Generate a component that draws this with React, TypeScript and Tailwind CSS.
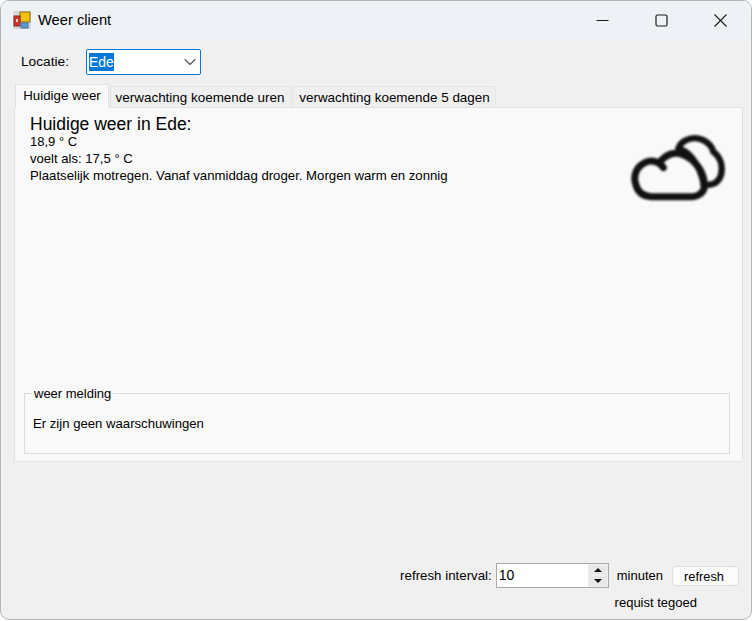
import { ChevronDown } from "lucide-react";

function AppIcon() {
  return (
    <svg width="18" height="18" viewBox="0 0 18 18" className="shrink-0">
      <rect x="0" y="0" width="18" height="18" fill="#d8d8d8" />
      <rect x="7" y="1" width="10" height="10" fill="#f4c20d" stroke="#8a6d1a" strokeWidth="1" />
      <rect x="1" y="5" width="6" height="10" fill="#d9342b" stroke="#7c2a26" strokeWidth="1" />
      <rect x="3" y="8" width="2" height="3" fill="#f3d0c8" />
      <rect x="8" y="12" width="7" height="5" fill="#5b9bd5" stroke="#3f74a8" strokeWidth="1" />
    </svg>
  );
}

function WindowButtons() {
  return (
    <div className="flex items-center pr-[1px]">
      <div className="flex h-[40px] w-[59px] items-center justify-center">
        <svg width="13" height="13" viewBox="0 0 13 13">
          <path d="M0.5 6.5H12.5" stroke="#1a1a1a" strokeWidth="1" fill="none" />
        </svg>
      </div>
      <div className="flex h-[40px] w-[59px] items-center justify-center">
        <svg width="13" height="13" viewBox="0 0 13 13">
          <rect x="1" y="1" width="11" height="11" rx="1.5" stroke="#1a1a1a" strokeWidth="1.2" fill="none" />
        </svg>
      </div>
      <div className="flex h-[40px] w-[59px] items-center justify-center">
        <svg width="13" height="13" viewBox="0 0 13 13">
          <path d="M0.5 0.5L12.5 12.5M12.5 0.5L0.5 12.5" stroke="#1a1a1a" strokeWidth="1.1" fill="none" />
        </svg>
      </div>
    </div>
  );
}

// upscaled low-res icon in the reference, hence the blur
function CloudIcon() {
  return (
    <svg width="123" height="90" viewBox="0 0 369 270" className="shrink-0 blur-[1px]">
      <path
        d="M205 85C212 65 235 52 262 55C285 58 305 75 310 95C330 110 340 135 333 165C325 190 305 198 280 193"
        fill="none"
        stroke="#111"
        strokeWidth="19"
        strokeLinecap="round"
      />
      <path d="M215 88C245 100 268 140 280 190" fill="none" stroke="#111" strokeWidth="17" strokeLinecap="round" />
      <path
        d="M160 143C150 125 125 118 105 128C80 140 70 165 76 188C82 218 100 230 125 230H245C270 230 287 212 283 188C278 145 245 108 205 100C185 97 168 105 152 123"
        fill="none"
        stroke="#111"
        strokeWidth="21"
        strokeLinecap="round"
        strokeLinejoin="round"
      />
    </svg>
  );
}

function Spinner() {
  return (
    <div className="flex h-[25px] w-[113px] items-stretch border border-[#a9a9a9] bg-white">
      <span className="flex-1 pl-[2px] text-[14px] leading-[22px] text-black">10</span>
      <div className="flex w-[20px] flex-col gap-[1px] bg-[#f0f0f0] p-[1px]">
        <div className="flex flex-1 items-center justify-center bg-[#e8e8e8]">
          <svg width="8" height="4" viewBox="0 0 8 4">
            <path d="M4 0L8 4H0Z" fill="#111" />
          </svg>
        </div>
        <div className="flex flex-1 items-center justify-center bg-[#e8e8e8]">
          <svg width="8" height="4" viewBox="0 0 8 4">
            <path d="M4 4L8 0H0Z" fill="#111" />
          </svg>
        </div>
      </div>
    </div>
  );
}

const tabClass =
  "h-[21px] mt-[2px] border border-b-0 border-[#e6e6e6] bg-[#efefef] text-[13.45px] leading-[21px] text-black";

export default function App() {
  return (
    <div className="h-[621px] w-[752px] overflow-hidden bg-white font-['Liberation_Sans',Arial,sans-serif]">
      <div className="flex h-[620px] w-[752px] flex-col overflow-hidden rounded-[9px] border border-[#b5b5b5] bg-[#f0f0f0]">
        <div className="flex h-[39px] shrink-0 items-center justify-between bg-[#eef2f7] pl-[12px]">
          <div className="flex items-center gap-[7px]">
            <AppIcon />
            <span className="text-[14.7px] text-black">Weer client</span>
          </div>
          <WindowButtons />
        </div>

        <div className="flex h-[35px] shrink-0 items-end pl-[20px]">
          <span className="w-[65px] pb-[5px] text-[13.7px] leading-[16px] text-black">Locatie:</span>
          <div className="flex h-[26px] w-[115px] items-center justify-between rounded-[2px] border border-[#0078d7] bg-white pl-[2px]">
            <span className="bg-[#0078d7] text-[14px] leading-[18px] text-white">Ede</span>
            <ChevronDown size={20} strokeWidth={1.3} color="#555" className="mr-[0px]" />
          </div>
        </div>

        <div className="flex h-[32px] shrink-0 items-end pl-[14px]">
          <div className="relative z-10 -mb-px h-[24px] w-[94px] border border-b-0 border-[#e2e2e2] bg-[#f9f9f9] text-center text-[13.3px] leading-[21px] text-black">
            Huidige weer
          </div>
          <div className={tabClass + " ml-[1px] w-[182px] pr-[2px] text-center"}>verwachting koemende uren</div>
          <div className={tabClass + " ml-[1px] w-[203px] text-center"}>verwachting koemende 5 dagen</div>
        </div>

        <div className="ml-[13px] mr-[8px] flex h-[355px] shrink-0 flex-col border border-[#e2e2e2] bg-[#f9f9f9] px-[9px] pb-[7px]">
          <div className="flex flex-1 justify-between">
            <div className="flex flex-col pl-[6px] pt-[7px] text-black">
              <span className="text-[17.5px] leading-[19px]">Huidige weer in Ede:</span>
              <span className="text-[13px] leading-[16px]">18,9 ° C</span>
              <span className="mt-[1px] text-[13.1px] leading-[16px]">voelt als: 17,5 ° C</span>
              <span className="mt-[1px] text-[13.2px] leading-[16px]">Plaatselijk motregen. Vanaf vanmiddag droger. Morgen warm en zonnig</span>
            </div>
            <div className="pt-[12px]">
              <CloudIcon />
            </div>
          </div>
          <fieldset className="mr-[3px] h-[68px] shrink-0 border border-[#dcdcdc] pl-[8px]">
            <legend className="-ml-[1px] px-[2px] text-[13px] leading-[15px] text-black">weer melding</legend>
            <p className="pt-[15px] text-[13.15px] leading-[16px] text-black">Er zijn geen waarschuwingen</p>
          </fieldset>
        </div>

        <div className="flex flex-1 flex-col items-end pr-[12px] pt-[101px]">
          <div className="flex items-center">
            <span className="text-[13.3px] text-black">refresh interval:</span>
            <div className="ml-[4px]">
              <Spinner />
            </div>
            <span className="ml-[8px] text-[13px] text-black">minuten</span>
            <button className="ml-[9px] h-[20px] w-[67px] rounded-[4px] border border-[#dedede] bg-[#fbfbfb] pr-[3px] pt-[1px] text-[12.8px] leading-[18px] text-black">
              refresh
            </button>
          </div>
          <span className="mr-[42px] mt-[7px] text-[13px] leading-[16px] text-black">requist tegoed</span>
        </div>
      </div>
    </div>
  );
}
